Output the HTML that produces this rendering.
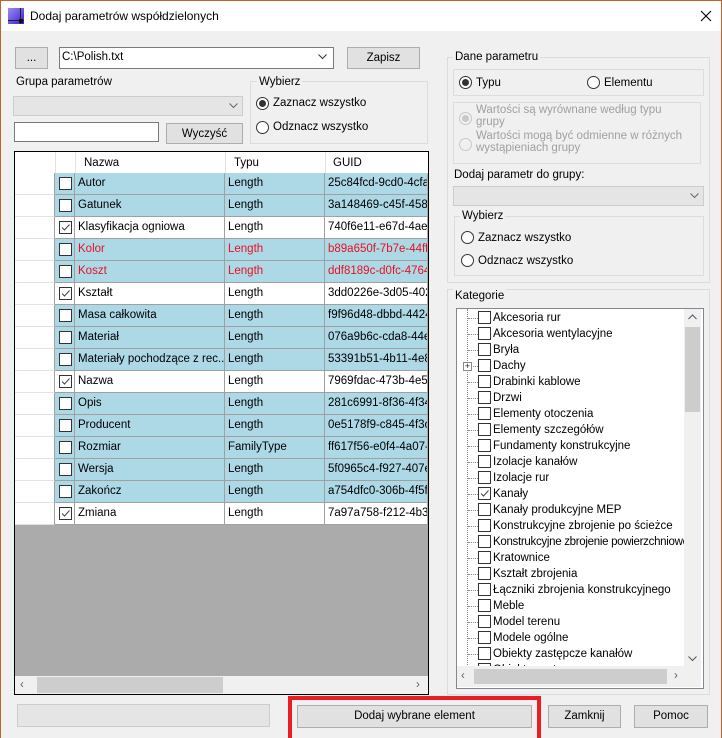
<!DOCTYPE html>
<html><head><meta charset="utf-8"><style>
*{box-sizing:border-box;margin:0;padding:0}
body{width:722px;height:738px;overflow:hidden;background:#f0f0f0;font-family:"Liberation Sans",sans-serif;font-size:11.5px;color:#000;position:relative}
.a{position:absolute}
.t{position:absolute;white-space:nowrap;line-height:14px}
.btn{position:absolute;background:#e1e1e1;border:1px solid #adadad;text-align:center;line-height:20px;white-space:nowrap}
.grp{position:absolute;border:1px solid #dcdcdc}
.gt{position:absolute;background:#f0f0f0;padding:0 2px;line-height:14px;white-space:nowrap}
.rad{position:absolute;width:13px;height:13px;border:1px solid #333;border-radius:50%;background:#fff}
.rad.on::after{content:"";position:absolute;left:2px;top:2px;width:7px;height:7px;border-radius:50%;background:#333}
.cb{position:absolute;width:13px;height:13px;border:1px solid #333;background:#fff}
.row{position:absolute;left:15px;width:412px;height:22px}
.row div{position:absolute;top:0;height:22px;line-height:21px;white-space:nowrap;overflow:hidden;border-bottom:1px solid #a0a0a0;background:#fff}
.row .h{left:0;width:40px;background:#fff;border-bottom:1px solid #e3e3e3;border-right:1px solid #a0a0a0}
.row .c{left:40px;width:20px;border-right:1px solid #a0a0a0}
.row .n{left:60px;width:150px;border-right:1px solid #a0a0a0;padding-left:3px}
.row .y{left:210px;width:100px;border-right:1px solid #a0a0a0;padding-left:3px}
.row .g{left:310px;width:102px;padding-left:3px}
.b div{background:#add8e6}
.b .h{background:#fff}
.r{color:#e81123}
.ti{position:absolute;left:0;height:16px;width:260px}
.ti .cb{left:21px;top:1px}
.ti span{position:absolute;left:36px;top:1px;line-height:14px;white-space:nowrap}
.ti i{position:absolute;left:11px;top:8px;width:10px;border-top:1px dotted #888}
</style></head><body>
<div class="a" style="left:0;top:0;width:722px;height:738px;border:1px solid #c0622a;border-bottom:none"></div>
<div class="a" style="left:1px;top:1px;width:720px;height:30px;background:#fff"></div>
<svg class="a" style="left:8px;top:8px" width="16" height="16"><defs><linearGradient id="g" x1="0" y1="0" x2="1" y2="1"><stop offset="0" stop-color="#9b8cf0"/><stop offset="1" stop-color="#3a1fd0"/></linearGradient></defs><rect width="16" height="16" fill="url(#g)"/><path d="M0 12.5H16M12.5 0V16" stroke="#222" stroke-width="1"/><rect x="11" y="11" width="4" height="4" fill="#111"/></svg>
<div class="t" style="left:30px;top:9px;font-size:12px">Dodaj parametrów współdzielonych</div>
<svg class="a" style="left:700px;top:10px" width="12" height="12"><path d="M1 1L11 11M11 1L1 11" stroke="#000" stroke-width="1.1"/></svg>

<div class="btn" style="left:15px;top:47px;width:33px;height:22px">...</div>
<div class="a" style="left:59px;top:47px;width:275px;height:22px;background:#fff;border:1px solid #7a7a7a"></div>
<div class="t" style="left:62px;top:50px">C:\Polish.txt</div>
<svg class="a" style="left:318px;top:54px" width="9" height="6"><path d="M0.5 0.5L4.5 4.5L8.5 0.5" stroke="#333" fill="none"/></svg>
<div class="btn" style="left:347px;top:47px;width:73px;height:22px">Zapisz</div>

<div class="t" style="left:16px;top:75px">Grupa parametrów</div>
<div class="a" style="left:13px;top:96px;width:230px;height:20px;background:#e5e5e5;border:1px solid #ccc"></div>
<svg class="a" style="left:229px;top:103px" width="9" height="6"><path d="M0.5 0.5L4.5 4.5L8.5 0.5" stroke="#666" fill="none"/></svg>
<div class="a" style="left:14px;top:122px;width:145px;height:20px;background:#fff;border:1px solid #7a7a7a"></div>
<div class="btn" style="left:166px;top:123px;width:77px;height:21px">Wyczyść</div>

<div class="grp" style="left:250px;top:81px;width:178px;height:63px"></div>
<div class="gt" style="left:257px;top:75px">Wybierz</div>
<div class="rad on" style="left:256px;top:97px"></div><div class="t" style="left:273px;top:96px">Zaznacz wszystko</div>
<div class="rad" style="left:256px;top:121px"></div><div class="t" style="left:273px;top:120px">Odznacz wszystko</div>

<div class="a" style="left:14px;top:151px;width:415px;height:544px;border:1px solid #000;background:#ababab;overflow:hidden">
 <div class="a" style="left:0;top:0;width:413px;height:21px;background:#fff">
  <div class="a" style="left:40px;top:0;width:1px;height:21px;background:#e3e3e3"></div>
  <div class="a" style="left:60px;top:0;width:1px;height:21px;background:#e3e3e3"></div>
  <div class="a" style="left:210px;top:0;width:1px;height:21px;background:#e3e3e3"></div>
  <div class="a" style="left:310px;top:0;width:1px;height:21px;background:#e3e3e3"></div>
  <div class="t" style="left:69px;top:4px">Nazwa</div>
  <div class="t" style="left:219px;top:4px">Typu</div>
  <div class="t" style="left:318px;top:4px">GUID</div>
 </div>
 <div class="a" style="left:0;top:524px;width:413px;height:18px;background:#f0f0f0"></div>
 <div class="a" style="left:22px;top:525px;width:186px;height:16px;background:#cdcdcd"></div>
 <div class="t" style="left:5px;top:526px;color:#606060">‹</div>
 <div class="t" style="left:401px;top:526px;color:#606060">›</div>
</div>
<div class="a" style="left:0;top:0">
<div class="row b" style="top:173px"><div class="h"></div><div class="c"><span class="cb" style="left:4px;top:4px"></span></div><div class="n">Autor</div><div class="y">Length</div><div class="g">25c84fcd-9cd0-4cfa-</div></div>
<div class="row b" style="top:195px"><div class="h"></div><div class="c"><span class="cb" style="left:4px;top:4px"></span></div><div class="n">Gatunek</div><div class="y">Length</div><div class="g">3a148469-c45f-458a</div></div>
<div class="row" style="top:217px"><div class="h"></div><div class="c"><span class="cb" style="left:4px;top:4px"><svg width="11" height="11" style="position:absolute;left:0;top:0"><path d="M2 5.5L4.5 8L9.5 2.5" stroke="#444" fill="none"/></svg></span></div><div class="n">Klasyfikacja ogniowa</div><div class="y">Length</div><div class="g">740f6e11-e67d-4ae7</div></div>
<div class="row b r" style="top:239px"><div class="h"></div><div class="c"><span class="cb" style="left:4px;top:4px"></span></div><div class="n">Kolor</div><div class="y">Length</div><div class="g">b89a650f-7b7e-44ff-8</div></div>
<div class="row b r" style="top:261px"><div class="h"></div><div class="c"><span class="cb" style="left:4px;top:4px"></span></div><div class="n">Koszt</div><div class="y">Length</div><div class="g">ddf8189c-d0fc-4764-</div></div>
<div class="row" style="top:283px"><div class="h"></div><div class="c"><span class="cb" style="left:4px;top:4px"><svg width="11" height="11" style="position:absolute;left:0;top:0"><path d="M2 5.5L4.5 8L9.5 2.5" stroke="#444" fill="none"/></svg></span></div><div class="n">Kształt</div><div class="y">Length</div><div class="g">3dd0226e-3d05-402a</div></div>
<div class="row b" style="top:305px"><div class="h"></div><div class="c"><span class="cb" style="left:4px;top:4px"></span></div><div class="n">Masa całkowita</div><div class="y">Length</div><div class="g">f9f96d48-dbbd-4424-</div></div>
<div class="row b" style="top:327px"><div class="h"></div><div class="c"><span class="cb" style="left:4px;top:4px"></span></div><div class="n">Materiał</div><div class="y">Length</div><div class="g">076a9b6c-cda8-44ea</div></div>
<div class="row b" style="top:349px"><div class="h"></div><div class="c"><span class="cb" style="left:4px;top:4px"></span></div><div class="n">Materiały pochodzące z rec...</div><div class="y">Length</div><div class="g">53391b51-4b11-4e8a</div></div>
<div class="row" style="top:371px"><div class="h"></div><div class="c"><span class="cb" style="left:4px;top:4px"><svg width="11" height="11" style="position:absolute;left:0;top:0"><path d="M2 5.5L4.5 8L9.5 2.5" stroke="#444" fill="none"/></svg></span></div><div class="n">Nazwa</div><div class="y">Length</div><div class="g">7969fdac-473b-4e59</div></div>
<div class="row b" style="top:393px"><div class="h"></div><div class="c"><span class="cb" style="left:4px;top:4px"></span></div><div class="n">Opis</div><div class="y">Length</div><div class="g">281c6991-8f36-4f34-</div></div>
<div class="row b" style="top:415px"><div class="h"></div><div class="c"><span class="cb" style="left:4px;top:4px"></span></div><div class="n">Producent</div><div class="y">Length</div><div class="g">0e5178f9-c845-4f3c-</div></div>
<div class="row b" style="top:437px"><div class="h"></div><div class="c"><span class="cb" style="left:4px;top:4px"></span></div><div class="n">Rozmiar</div><div class="y">FamilyType</div><div class="g">ff617f56-e0f4-4a07-a</div></div>
<div class="row b" style="top:459px"><div class="h"></div><div class="c"><span class="cb" style="left:4px;top:4px"></span></div><div class="n">Wersja</div><div class="y">Length</div><div class="g">5f0965c4-f927-407e-</div></div>
<div class="row b" style="top:481px"><div class="h"></div><div class="c"><span class="cb" style="left:4px;top:4px"></span></div><div class="n">Zakończ</div><div class="y">Length</div><div class="g">a754dfc0-306b-4f5f-b</div></div>
<div class="row" style="top:503px"><div class="h"></div><div class="c"><span class="cb" style="left:4px;top:4px"><svg width="11" height="11" style="position:absolute;left:0;top:0"><path d="M2 5.5L4.5 8L9.5 2.5" stroke="#444" fill="none"/></svg></span></div><div class="n">Zmiana</div><div class="y">Length</div><div class="g">7a97a758-f212-4b3d</div></div>
</div>

<div class="grp" style="left:447px;top:57px;width:263px;height:226px"></div>
<div class="gt" style="left:453px;top:50px">Dane parametru</div>
<div class="grp" style="left:453px;top:69px;width:251px;height:27px"></div>
<div class="rad on" style="left:459px;top:76px"></div><div class="t" style="left:476px;top:76px">Typu</div>
<div class="rad" style="left:587px;top:76px"></div><div class="t" style="left:604px;top:76px">Elementu</div>
<div class="grp" style="left:453px;top:102px;width:248px;height:62px"></div>
<div class="rad" style="left:459px;top:112px;border-color:#c8c8c8;background:#f0f0f0"></div>
<div class="a" style="left:462px;top:115px;width:7px;height:7px;border-radius:50%;background:#c8c8c8"></div>
<div class="t" style="left:476px;top:104px;color:#a0a0a0;line-height:12px">Wartości są wyrównane według typu<br>grupy</div>
<div class="rad" style="left:459px;top:138px;border-color:#c8c8c8;background:#f0f0f0"></div>
<div class="t" style="left:476px;top:130px;color:#a0a0a0;line-height:12px">Wartości mogą być odmienne w różnych<br>wystąpieniach grupy</div>
<div class="t" style="left:454px;top:168px">Dodaj parametr do grupy:</div>
<div class="a" style="left:453px;top:186px;width:251px;height:20px;background:#e5e5e5;border:1px solid #ccc"></div>
<svg class="a" style="left:690px;top:193px" width="9" height="6"><path d="M0.5 0.5L4.5 4.5L8.5 0.5" stroke="#666" fill="none"/></svg>
<div class="grp" style="left:454px;top:216px;width:250px;height:60px"></div>
<div class="gt" style="left:460px;top:209px">Wybierz</div>
<div class="rad" style="left:461px;top:231px"></div><div class="t" style="left:478px;top:231px">Zaznacz wszystko</div>
<div class="rad" style="left:461px;top:254px"></div><div class="t" style="left:478px;top:254px">Odznacz wszystko</div>

<div class="grp" style="left:447px;top:289px;width:263px;height:406px"></div>
<div class="gt" style="left:453px;top:289px">Kategorie</div>
<div class="a" style="left:456px;top:308px;width:248px;height:381px;background:#fff;border:1px solid #828790"></div>
<div class="a" style="left:457px;top:309px;width:227px;height:357px;overflow:hidden">
 <div class="a" style="left:10px;top:0;height:360px;border-left:1px dotted #888"></div>
 <div style="position:absolute;left:0;top:1px">
 <div class="ti" style="top:0"><i></i><span class="cb"></span><span>Akcesoria rur</span></div>
 <div class="ti" style="top:16px"><i></i><span class="cb"></span><span>Akcesoria wentylacyjne</span></div>
 <div class="ti" style="top:32px"><i></i><span class="cb"></span><span>Bryła</span></div>
 <div class="ti" style="top:48px"><i></i><span class="a" style="left:6px;top:4px;width:9px;height:9px;border:1px solid #8a8a8a;background:#fff;font-size:9px;line-height:7px;text-align:center;color:#224">+</span><span class="cb"></span><span>Dachy</span></div>
 <div class="ti" style="top:64px"><i></i><span class="cb"></span><span>Drabinki kablowe</span></div>
 <div class="ti" style="top:80px"><i></i><span class="cb"></span><span>Drzwi</span></div>
 <div class="ti" style="top:96px"><i></i><span class="cb"></span><span>Elementy otoczenia</span></div>
 <div class="ti" style="top:112px"><i></i><span class="cb"></span><span>Elementy szczegółów</span></div>
 <div class="ti" style="top:128px"><i></i><span class="cb"></span><span>Fundamenty konstrukcyjne</span></div>
 <div class="ti" style="top:144px"><i></i><span class="cb"></span><span>Izolacje kanałów</span></div>
 <div class="ti" style="top:160px"><i></i><span class="cb"></span><span>Izolacje rur</span></div>
 <div class="ti" style="top:176px"><i></i><span class="cb"><svg width="11" height="11" style="position:absolute;left:0;top:0"><path d="M2 5.5L4.5 8L9.5 2.5" stroke="#444" fill="none"/></svg></span><span>Kanały</span></div>
 <div class="ti" style="top:192px"><i></i><span class="cb"></span><span>Kanały produkcyjne MEP</span></div>
 <div class="ti" style="top:208px"><i></i><span class="cb"></span><span>Konstrukcyjne zbrojenie po ścieżce</span></div>
 <div class="ti" style="top:224px"><i></i><span class="cb"></span><span style="letter-spacing:-0.3px">Konstrukcyjne zbrojenie powierzchniowe</span></div>
 <div class="ti" style="top:240px"><i></i><span class="cb"></span><span>Kratownice</span></div>
 <div class="ti" style="top:256px"><i></i><span class="cb"></span><span>Kształt zbrojenia</span></div>
 <div class="ti" style="top:272px"><i></i><span class="cb"></span><span>Łączniki zbrojenia konstrukcyjnego</span></div>
 <div class="ti" style="top:288px"><i></i><span class="cb"></span><span>Meble</span></div>
 <div class="ti" style="top:304px"><i></i><span class="cb"></span><span>Model terenu</span></div>
 <div class="ti" style="top:320px"><i></i><span class="cb"></span><span>Modele ogólne</span></div>
 <div class="ti" style="top:336px"><i></i><span class="cb"></span><span>Obiekty zastępcze kanałów</span></div>
 <div class="ti" style="top:352px"><i></i><span class="cb"></span><span>Obiekty zastępcze rur</span></div>
 </div>
</div>
<div class="a" style="left:684px;top:309px;width:17px;height:357px;background:#f0f0f0"></div>
<div class="a" style="left:685px;top:327px;width:15px;height:85px;background:#cdcdcd"></div>
<svg class="a" style="left:688px;top:314px" width="9" height="6"><path d="M0.5 5L4.5 1L8.5 5" stroke="#555" fill="none"/></svg>
<svg class="a" style="left:688px;top:656px" width="9" height="6"><path d="M0.5 0.5L4.5 4.5L8.5 0.5" stroke="#555" fill="none"/></svg>
<div class="a" style="left:457px;top:666px;width:227px;height:21px;background:#f0f0f0"></div>
<div class="a" style="left:474px;top:669px;width:193px;height:15px;background:#cdcdcd"></div>
<div class="t" style="left:461px;top:669px;color:#606060">‹</div>
<div class="t" style="left:674px;top:669px;color:#606060">›</div>
<div class="a" style="left:684px;top:666px;width:17px;height:21px;background:#f0f0f0"></div>

<div class="a" style="left:17px;top:704px;width:253px;height:23px;background:#e5e5e5;border:1px solid #ccc"></div>
<div class="a" style="left:288px;top:696px;width:253px;height:42px;border:4px solid #ec1c24;border-bottom:none"></div>
<div class="btn" style="left:297px;top:705px;width:235px;height:23px">Dodaj wybrane element</div>
<div class="btn" style="left:548px;top:705px;width:73px;height:23px">Zamknij</div>
<div class="btn" style="left:634px;top:705px;width:74px;height:23px">Pomoc</div>
</body></html>
